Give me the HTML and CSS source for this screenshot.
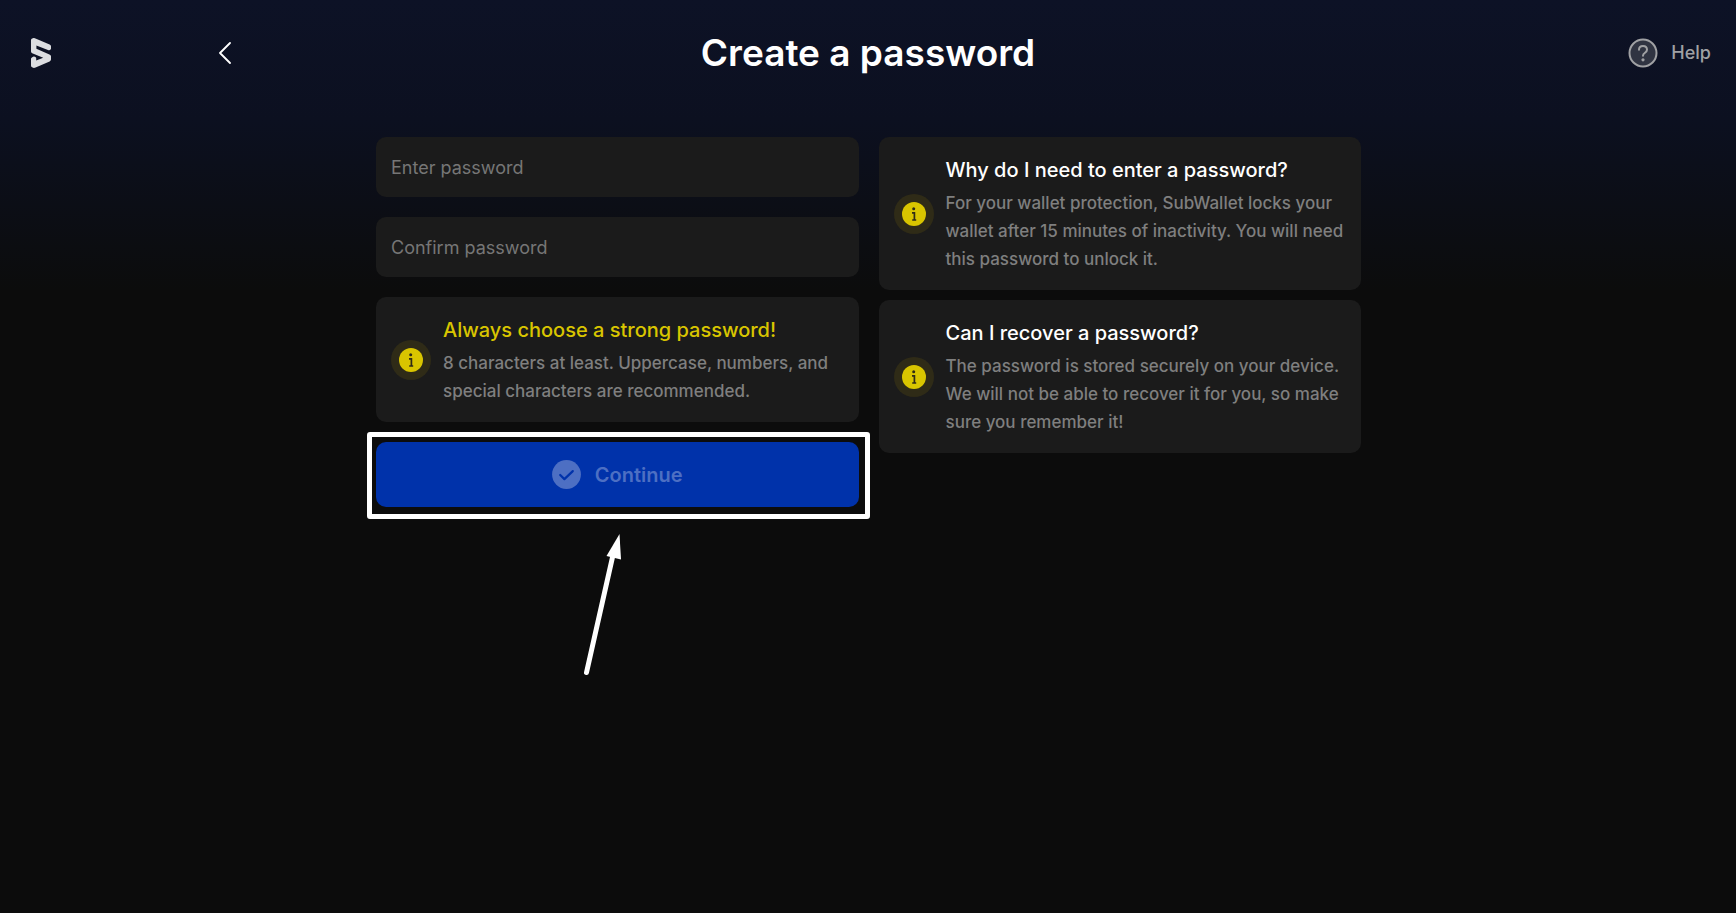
FILE: index.html
```html
<!DOCTYPE html>
<html lang="en">
<head>
<meta charset="utf-8">
<title>Create a password</title>
<link rel="stylesheet" href="styles.css">
</head>
<body>
<svg class="sprite" aria-hidden="true">
  <symbol id="info" viewBox="0 0 40 40">
    <circle cx="20" cy="20" r="20" fill="#2f2b17"/>
    <circle cx="20" cy="20" r="12" fill="#d9c500"/>
    <circle cx="19.7" cy="14.8" r="1.5" fill="#2f2b17"/>
    <path d="M18 18.8h2.400v7M18.200 26h4" fill="none" stroke="#2f2b17" stroke-width="1.7"/>
  </symbol>
</svg>
<header class="header">
  <div class="header-start">
    <svg class="logo" viewBox="0 0 20 30" role="img" aria-label="SubWallet"><path d="M0 2.200Q0 .8 1.200 .5L2.500 .1Q3.400 -.1 4.500 .4L18.600 6.400Q20 7 20 8.200V10.800Q19.600 12.600 17.600 12.200L5.400 7.400V10.800L18.400 16.400Q20 17.200 20 18.200V21.400Q20 22.600 18.600 23.400L4.600 29.600Q2.800 30.300 1.600 29.600L.7 29Q0 28.400 0 27.400V20.600Q.4 19.400 1.600 18.900L2.800 18.500Q4.800 18.400 5.200 20V22.600L12.200 19.800 1.200 15.200Q0 14.600 0 13.400Z" fill="#dcdde0"/></svg>
    <button class="back" type="button" aria-label="Back"><svg viewBox="0 0 12 22" width="12" height="22"><path d="M11 1 1 11 11 21" fill="none" stroke="#fff" stroke-width="1.8" stroke-linecap="round" stroke-linejoin="round"/></svg></button>
  </div>
  <h1 class="title">Create a password</h1>
  <button class="help" type="button">
    <svg viewBox="0 0 30 30" width="30" height="30" aria-hidden="true"><circle cx="15" cy="15" r="13.5" fill="#303442" stroke="#a0a1a4" stroke-width="2"/><path d="M11 11.800c0-5 8-5 8 0 0 3.200-4 2.800-4 6" fill="none" stroke="#a0a1a4" stroke-width="2" stroke-linecap="round"/><circle cx="15" cy="21.8" r="1.6" fill="#a0a1a4"/></svg>
    <span>Help</span>
  </button>
</header>
<main class="content">
  <form class="column form">
    <input class="field" type="password" placeholder="Enter password" aria-label="Enter password">
    <input class="field" type="password" placeholder="Confirm password" aria-label="Confirm password">
    <section class="card">
      <svg class="card-icon" aria-hidden="true"><use href="#info"/></svg>
      <div class="card-body">
        <h2 class="card-title warning">Always choose a strong password!</h2>
        <p class="card-text">8 characters at least. Uppercase, numbers, and special characters are recommended.</p>
      </div>
    </section>
    <div class="submit">
      <button class="continue" type="submit" disabled>
        <svg viewBox="0 0 29 29" width="29" height="29" aria-hidden="true"><circle cx="14.5" cy="14.5" r="14.4" fill="#4d6fc3"/><path d="m8.200 15 4.200 4.100 8.400-8" fill="none" stroke="#0032aa" stroke-width="2.2" stroke-linecap="round" stroke-linejoin="round"/></svg>
        <span>Continue</span>
      </button>
      <div class="highlight"></div>
      <svg class="pointer" viewBox="0 0 40 144" aria-hidden="true"><path d="M4.500 139.500 31 22" stroke="#fff" stroke-width="5" stroke-linecap="round"/><path d="M37.500 1 24.500 23 39 26.500Z" fill="#fff"/></svg>
    </div>
  </form>
  <div class="column notes">
    <section class="card">
      <svg class="card-icon" aria-hidden="true"><use href="#info"/></svg>
      <div class="card-body">
        <h2 class="card-title">Why do I need to enter a password?</h2>
        <p class="card-text">For your wallet protection, SubWallet locks your wallet after 15 minutes of inactivity. You will need this password to unlock it.</p>
      </div>
    </section>
    <section class="card">
      <svg class="card-icon" aria-hidden="true"><use href="#info"/></svg>
      <div class="card-body">
        <h2 class="card-title">Can I recover a password?</h2>
        <p class="card-text">The password is stored securely on your device. We will not be able to recover it for you, so make sure you remember it!</p>
      </div>
    </section>
  </div>
</main>
</body>
</html>
```
FILE: styles.css
```css
* { box-sizing: border-box; }
body {
  margin: 0;
  min-height: 100vh;
  color: #fff;
  background: #0c0c0c linear-gradient(#0d1226 0, #0c1020 120px, #0c0c0c 290px) no-repeat;
  font-family: Inter, "Liberation Sans", sans-serif;
}
h1, h2, p { margin: 0; }
button { padding: 0; border: 0; background: none; color: inherit; font: inherit; }
.sprite { display: none; }
.header {
  display: grid;
  grid-template-columns: 1fr auto 1fr;
  align-items: center;
  height: 105px;
  padding: 0 25px;
}
.header-start { display: flex; align-items: center; gap: 168px; padding-left: 6px; }
.logo { width: 20px; height: 30px; }
.back { display: flex; }
.title { font-size: 37px; line-height: 48px; font-weight: 600; }
.help {
  display: flex;
  align-items: center;
  justify-self: end;
  gap: 13px;
  color: #a0a1a4;
  font-size: 18px;
  font-weight: 500;
}
.content {
  display: grid;
  grid-template-columns: 1fr 1fr;
  align-items: start;
  gap: 20px;
  max-width: 1026px;
  margin: 0 auto;
  padding: 32px 20px 32px 21px;
}
.column { display: flex; flex-direction: column; }
.form { gap: 20px; }
.notes { gap: 10px; }
.field {
  width: 100%;
  height: 60px;
  padding: 0 15px;
  border: 0;
  border-radius: 10px;
  background: #1b1b1b;
  color: #fff;
  font: inherit;
  font-size: 18px;
}
.field::placeholder { color: #767676; opacity: 1; }
.card {
  display: flex;
  align-items: center;
  gap: 12px;
  padding: 18px 13px 17px 15px;
  border-radius: 10px;
  background: #1b1b1b;
}
.card-icon { flex: none; width: 40px; height: 40px; }
.card-title { margin-bottom: 4px; font-size: 20px; line-height: 30px; font-weight: 500; }
.warning { color: #d9c500; }
.card-text { color: #7f7f7f; font-size: 17px; line-height: 28px; font-weight: 500; }
.submit { position: relative; }
.continue {
  display: flex;
  align-items: center;
  justify-content: center;
  gap: 14px;
  width: 100%;
  height: 65px;
  border-radius: 10px;
  background: #0032aa;
  color: #4d6fc3;
  font-size: 20px;
  font-weight: 600;
}
.highlight {
  position: absolute;
  inset: -10px -11px -12px -9px;
  border: 5px solid #fff;
  border-radius: 3px;
  pointer-events: none;
}
.pointer {
  position: absolute;
  top: 91px;
  left: 206px;
  width: 40px;
  height: 144px;
}
```
